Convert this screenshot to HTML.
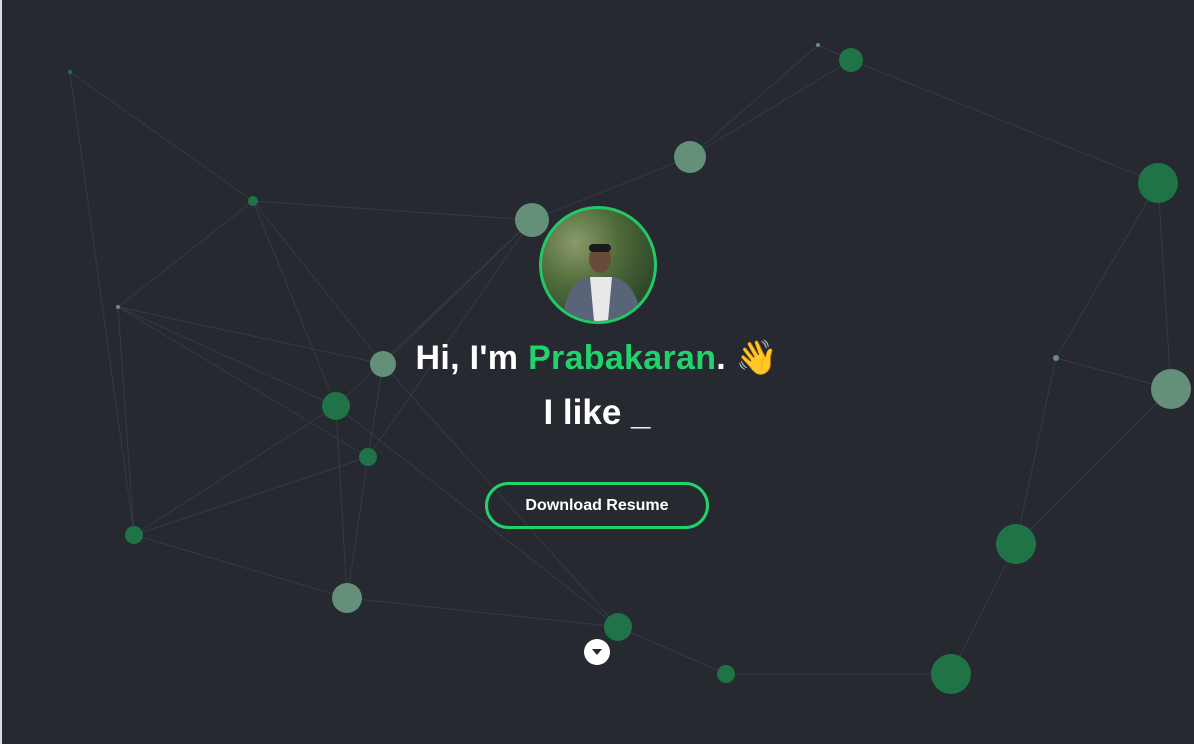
<!DOCTYPE html><html><head><meta charset="utf-8"><style>
html,body{margin:0;padding:0;width:1194px;height:744px;overflow:hidden;background:#262930;font-family:"Liberation Sans",sans-serif}
#bg{position:absolute;left:0;top:0}
.edge{position:absolute;left:0;top:0;width:2px;height:744px;background:#dcdcdc}
.av{position:absolute;left:539px;top:206px;width:112px;height:112px;border-radius:50%;border:3px solid #22c866;overflow:hidden;background:radial-gradient(circle at 30% 30%,#8a9a6a,#4f6a3a 40%,#2f4a2a 75%)}
h1{position:absolute;left:0;width:1194px;top:338px;margin:0;text-align:center;font-size:34px;font-weight:bold;color:#fff;letter-spacing:.3px}
h1 span{color:#22d36b}
h2{position:absolute;left:0;width:1194px;top:393px;margin:0;text-align:center;font-size:35px;font-weight:bold;color:#fff}
.btn{position:absolute;left:485px;top:482px;width:218px;height:41px;border:3px solid #22d36b;border-radius:24px;color:#fff;font-size:16px;font-weight:bold;text-align:center;line-height:41px}
.dn{position:absolute;left:584px;top:639px;width:26px;height:26px;border-radius:50%;background:#fff}
.dn:after{content:"";position:absolute;left:8px;top:10px;border-left:5px solid transparent;border-right:5px solid transparent;border-top:6px solid #262930}
</style></head><body>
<svg id="bg" width="1194" height="744">
<g stroke="#40464c" stroke-width="1" opacity=".6">
<line x1="70" y1="72" x2="253" y2="201"/><line x1="70" y1="72" x2="134" y2="535"/>
<line x1="253" y1="201" x2="118" y2="307"/><line x1="253" y1="201" x2="532" y2="220"/>
<line x1="253" y1="201" x2="336" y2="406"/><line x1="253" y1="201" x2="383" y2="364"/>
<line x1="118" y1="307" x2="336" y2="406"/><line x1="118" y1="307" x2="383" y2="364"/>
<line x1="118" y1="307" x2="368" y2="457"/><line x1="118" y1="307" x2="134" y2="535"/>
<line x1="134" y1="535" x2="336" y2="406"/><line x1="134" y1="535" x2="368" y2="457"/>
<line x1="134" y1="535" x2="347" y2="598"/><line x1="347" y1="598" x2="368" y2="457"/>
<line x1="347" y1="598" x2="336" y2="406"/><line x1="347" y1="598" x2="618" y2="627"/>
<line x1="368" y1="457" x2="383" y2="364"/><line x1="383" y1="364" x2="532" y2="220"/>
<line x1="336" y1="406" x2="532" y2="220"/><line x1="368" y1="457" x2="532" y2="220"/>
<line x1="532" y1="220" x2="690" y2="157"/><line x1="690" y1="157" x2="851" y2="60"/>
<line x1="690" y1="157" x2="818" y2="45"/><line x1="818" y1="45" x2="851" y2="60"/>
<line x1="851" y1="60" x2="1158" y2="183"/><line x1="1158" y1="183" x2="1056" y2="358"/>
<line x1="1158" y1="183" x2="1171" y2="389"/><line x1="1056" y1="358" x2="1171" y2="389"/>
<line x1="1056" y1="358" x2="1016" y2="544"/><line x1="1016" y1="544" x2="1171" y2="389"/>
<line x1="1016" y1="544" x2="951" y2="674"/><line x1="951" y1="674" x2="726" y2="674"/>
<line x1="726" y1="674" x2="618" y2="627"/><line x1="383" y1="364" x2="618" y2="627"/>
<line x1="336" y1="406" x2="618" y2="627"/>
</g>
<g fill="#1f7346">
<circle cx="851" cy="60" r="12"/><circle cx="336" cy="406" r="14"/><circle cx="368" cy="457" r="9"/>
<circle cx="134" cy="535" r="9"/><circle cx="618" cy="627" r="14"/><circle cx="726" cy="674" r="9"/>
<circle cx="951" cy="674" r="20"/><circle cx="1016" cy="544" r="20"/><circle cx="1158" cy="183" r="20"/>
<circle cx="253" cy="201" r="5"/><circle cx="70" cy="72" r="2"/>
</g>
<g fill="#648f79">
<circle cx="690" cy="157" r="16"/><circle cx="532" cy="220" r="17"/><circle cx="383" cy="364" r="13"/>
<circle cx="347" cy="598" r="15"/><circle cx="1171" cy="389" r="20"/>
<circle cx="818" cy="45" r="2"/><circle cx="1056" cy="358" r="3"/><circle cx="118" cy="307" r="2"/>
</g>
</svg>
<div class="edge"></div>
<div class="av"><svg width="112" height="112"><ellipse cx="58" cy="50" rx="11" ry="14" fill="#6a4a38"/><rect x="47" y="35" width="22" height="8" rx="4" fill="#1a1a1a"/><path d="M20 112 Q25 72 45 68 L72 68 Q95 74 100 112Z" fill="#5a6478"/><path d="M48 68 L70 68 L66 112 L52 112Z" fill="#e8e8e8"/></svg></div>
<h1>Hi, I'm <span>Prabakaran</span>. 👋</h1>
<h2>I like _</h2>
<div class="btn">Download Resume</div>
<div class="dn"></div>
</body></html>
